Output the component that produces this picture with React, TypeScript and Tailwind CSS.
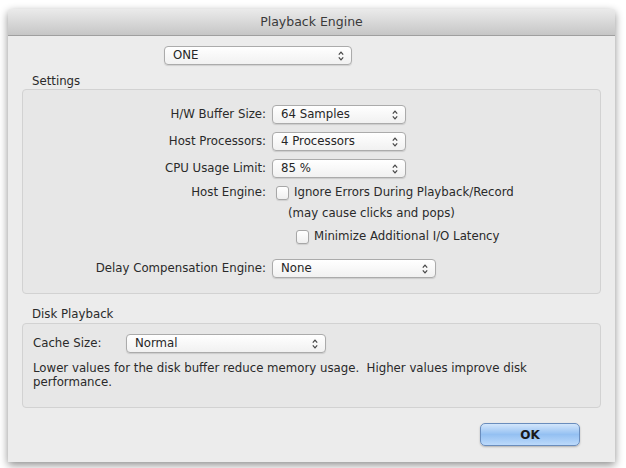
import React from "react";

const font = { fontFamily: '"DejaVu Sans", Verdana, sans-serif' };

function Arrows() {
  return (
    <svg width="6" height="10" viewBox="0 0 6 10" className="shrink-0">
      <path d="M0.8 3.6 L3 1.2 L5.2 3.6" fill="none" stroke="#444" strokeWidth="1.2" />
      <path d="M0.8 6.4 L3 8.8 L5.2 6.4" fill="none" stroke="#444" strokeWidth="1.2" />
    </svg>
  );
}

function Select({ value, w }: { value: string; w: string }) {
  return (
    <div
      className={`${w} h-[19px] flex items-center justify-between pl-[8px] pr-[7px] rounded-[4px] border border-[#ababab] bg-gradient-to-b from-[#ffffff] to-[#f1f1f1] shadow-[0_1px_1px_rgba(0,0,0,0.12)] text-[11.75px] text-[#262626]`}
    >
      <span>{value}</span>
      <Arrows />
    </div>
  );
}

function Check() {
  return (
    <div className="w-[13px] h-[14px] rounded-[3px] border border-[#a7a7a7] bg-gradient-to-b from-[#ffffff] to-[#efefef] shadow-[0_1px_1px_rgba(0,0,0,0.1)] shrink-0" />
  );
}

function Row({ label, children }: { label: string; children: React.ReactNode }) {
  return (
    <div className="flex items-center h-[19px]">
      <div className="w-[249px] pr-[6px] text-right text-[11.75px] text-[#2a2a2a] whitespace-nowrap">{label}</div>
      {children}
    </div>
  );
}

export default function App() {
  return (
    <div className="w-[626px] h-[468px] bg-white pt-[9px] pl-[8px]" style={font}>
      <div className="w-[607px] h-[453px] bg-[#ececec] flex flex-col shadow-[0_3px_8px_rgba(0,0,0,0.45)] rounded-t-[4px]">
        <div className="h-[27px] shrink-0 flex items-center justify-center rounded-t-[4px] bg-gradient-to-b from-[#ebebeb] to-[#c6c6c6] border-b border-[#9f9f9f] text-[12.5px] text-[#3a3a3a]">
          Playback Engine
        </div>

        <div className="flex pl-[156px] pt-[10px]">
          <Select value="ONE" w="w-[188px]" />
        </div>

        <div className="pl-[24px] pt-[9px] h-[24px] text-[11.75px] text-[#2a2a2a] leading-[14px]">Settings</div>

        <div className="mx-[14px] h-[205px] rounded-[4px] border border-[#d2d2d2] bg-[#e7e7e7] pt-[15px] flex flex-col">
          <Row label="H/W Buffer Size:">
            <Select value="64 Samples" w="w-[134px]" />
          </Row>
          <div className="h-[8px]" />
          <Row label="Host Processors:">
            <Select value="4 Processors" w="w-[134px]" />
          </Row>
          <div className="h-[8px]" />
          <Row label="CPU Usage Limit:">
            <Select value="85 %" w="w-[134px]" />
          </Row>
          <div className="h-[5px]" />
          <div className="flex items-center h-[19px]">
            <div className="w-[249px] pr-[6px] text-right text-[11.75px] text-[#2a2a2a]">Host Engine:</div>
            <div className="flex items-center gap-[5px] pl-[4px]">
              <Check />
              <span className="text-[11.75px] text-[#2a2a2a]">Ignore Errors During Playback/Record</span>
            </div>
          </div>
          <div className="pl-[265px] h-[24px] flex items-center text-[11.75px] text-[#2a2a2a]">(may cause clicks and pops)</div>
          <div className="pl-[273px] h-[22px] flex items-center gap-[5px]">
            <Check />
            <span className="text-[11.75px] text-[#2a2a2a]">Minimize Additional I/O Latency</span>
          </div>
          <div className="h-[11px]" />
          <Row label="Delay Compensation Engine:">
            <Select value="None" w="w-[164px]" />
          </Row>
        </div>

        <div className="pl-[24px] pt-[13px] h-[29px] text-[11.75px] text-[#2a2a2a] leading-[14px]">Disk Playback</div>

        <div className="mx-[14px] h-[85px] rounded-[4px] border border-[#d2d2d2] bg-[#e7e7e7] pt-[10px] pl-[10px] flex flex-col">
          <div className="flex items-center h-[19px]">
            <div className="w-[93px] text-[11.75px] text-[#2a2a2a]">Cache Size:</div>
            <Select value="Normal" w="w-[200px]" />
          </div>
          <div className="pt-[8px] text-[11.75px] leading-[14px] text-[#2a2a2a] whitespace-nowrap">
            Lower values for the disk buffer reduce memory usage.&nbsp; Higher values improve disk
            <br />
            performance.
          </div>
        </div>

        <div className="flex justify-end pr-[35px] pt-[15px]">
          <div className="w-[100px] h-[23px] rounded-[5px] border border-[#6a8dbd] bg-gradient-to-b from-[#d3e6fb] via-[#94c0f2] to-[#bcdafb] shadow-[0_1px_2px_rgba(0,0,0,0.25)] flex items-center justify-center text-[12px] font-bold text-[#1a1a1a]">
            OK
          </div>
        </div>
      </div>
    </div>
  );
}
